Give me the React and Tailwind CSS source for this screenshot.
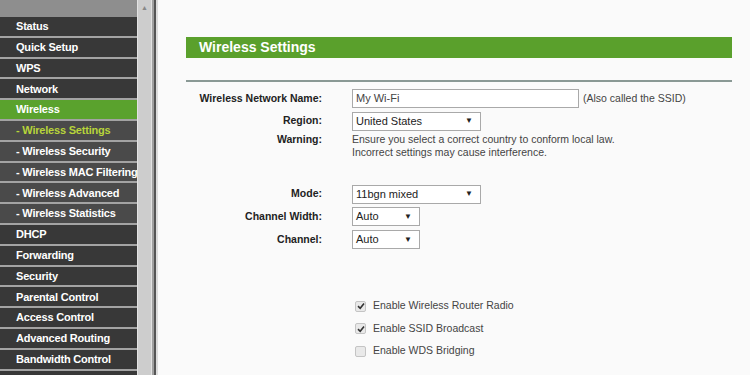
const menu = [
  { label: "Status" },
  { label: "Quick Setup" },
  { label: "WPS" },
  { label: "Network" },
  { label: "Wireless", active: true },
  { label: "- Wireless Settings", sub: true, current: true },
  { label: "- Wireless Security", sub: true },
  { label: "- Wireless MAC Filtering", sub: true },
  { label: "- Wireless Advanced", sub: true },
  { label: "- Wireless Statistics", sub: true },
  { label: "DHCP" },
  { label: "Forwarding" },
  { label: "Security" },
  { label: "Parental Control" },
  { label: "Access Control" },
  { label: "Advanced Routing" },
  { label: "Bandwidth Control" },
  { label: "" },
];

function Select({ value, width }) {
  return (
    <div
      className={`flex h-[19px] items-center justify-between border border-[#a9a9a9] bg-white pl-[3px] pr-[7px] text-[11px] text-[#222] ${width}`}
    >
      <span>{value}</span>
      <span className="text-[8px] text-[#222]">▼</span>
    </div>
  );
}

function Check({ checked, label }) {
  return (
    <div className="flex h-[22.5px] items-center">
      <div className="ml-[3px] flex h-[11px] w-[11px] items-center justify-center rounded-[2px] border border-[#c4c4c4] bg-[#e9e9e9]">
        {checked && (
          <svg width="8" height="8" viewBox="0 0 8 8">
            <path d="M1 4.2 L3.2 6.3 L7 1.5" fill="none" stroke="#333" strokeWidth="1.6" />
          </svg>
        )}
      </div>
      <span className="ml-[7px] text-[10.5px] text-[#444]">{label}</span>
    </div>
  );
}

export default function App() {
  return (
    <div
      className="flex h-[375px] w-[750px] overflow-hidden bg-[#fafafa]"
      style={{ fontFamily: '"Liberation Sans", Arial, sans-serif' }}
    >
      {/* left menu */}
      <div className="flex w-[137px] flex-col overflow-hidden bg-[#9a9a9a]">
        <div className="h-[17px] shrink-0 bg-[#8e8e8e]" />
        {menu.map((item, i) => (
          <div
            key={i}
            className={`flex h-[20.8px] shrink-0 items-center border-b-2 border-[#a3a3a3] pl-[16px] text-[11px] font-bold tracking-[-0.2px] whitespace-nowrap ${
              item.active
                ? "bg-[#5aa22d] text-white"
                : item.sub
                ? "bg-[#4a4a4a]"
                : "bg-[#383838] text-white"
            } ${item.current ? "text-[#b7d43a]" : item.sub ? "text-white" : ""}`}
          >
            {item.label}
          </div>
        ))}
      </div>

      {/* scrollbar */}
      <div className="flex w-[21px]">
        <div className="flex w-[15px] flex-col items-center bg-[#cdcdcd] border-x border-[#e2e2e2]">
          <span className="mt-[3px] text-[7px] text-[#888]">▲</span>
        </div>
        <div className="w-[2px] bg-[#a0a0a0]" />
        <div className="w-[2px] bg-[#555]" />
        <div className="w-[2px] bg-[#dcdcdc]" />
      </div>

      {/* content */}
      <div className="flex-1 pl-[28px] pr-[18px] pt-[37px]">
        <div className="flex h-[21px] items-center bg-[#5aa02c] pl-[13px] text-[14px] font-bold text-white">
          Wireless Settings
        </div>
        <div className="mt-[22px] h-[2px] bg-[#8a9995]" />

        <div className="mt-[5px] flex flex-col text-[10.5px]">
          <div className="flex h-[23px] items-center">
            <div className="w-[136px] text-right font-bold text-[#222]">Wireless Network Name:</div>
            <div className="ml-[30px] flex h-[19px] w-[227px] items-center border border-[#a9a9a9] bg-white pl-[3px] text-[11px] text-[#444]">
              My Wi-Fi
            </div>
            <span className="ml-[4px] text-[#444]">(Also called the SSID)</span>
          </div>
          <div className="flex h-[22px] items-center">
            <div className="w-[136px] text-right font-bold text-[#222]">Region:</div>
            <div className="ml-[30px]">
              <Select value="United States" width="w-[129px]" />
            </div>
          </div>
          <div className="flex pt-[1px]">
            <div className="w-[136px] text-right font-bold leading-[13px] text-[#222]">Warning:</div>
            <div className="ml-[30px] leading-[13px] text-[#444]">
              Ensure you select a correct country to conform local law.
              <br />
              Incorrect settings may cause interference.
            </div>
          </div>

          <div className="mt-[24px] flex h-[22px] items-center">
            <div className="w-[136px] text-right font-bold text-[#222]">Mode:</div>
            <div className="ml-[30px]">
              <Select value="11bgn mixed" width="w-[129px]" />
            </div>
          </div>
          <div className="flex h-[23px] items-center">
            <div className="w-[136px] text-right font-bold text-[#222]">Channel Width:</div>
            <div className="ml-[30px]">
              <Select value="Auto" width="w-[68px]" />
            </div>
          </div>
          <div className="flex h-[23px] items-center">
            <div className="w-[136px] text-right font-bold text-[#222]">Channel:</div>
            <div className="ml-[30px]">
              <Select value="Auto" width="w-[68px]" />
            </div>
          </div>

          <div className="ml-[166px] mt-[44px] flex flex-col">
            <Check checked label="Enable Wireless Router Radio" />
            <Check checked label="Enable SSID Broadcast" />
            <Check label="Enable WDS Bridging" />
          </div>
        </div>
      </div>
    </div>
  );
}
